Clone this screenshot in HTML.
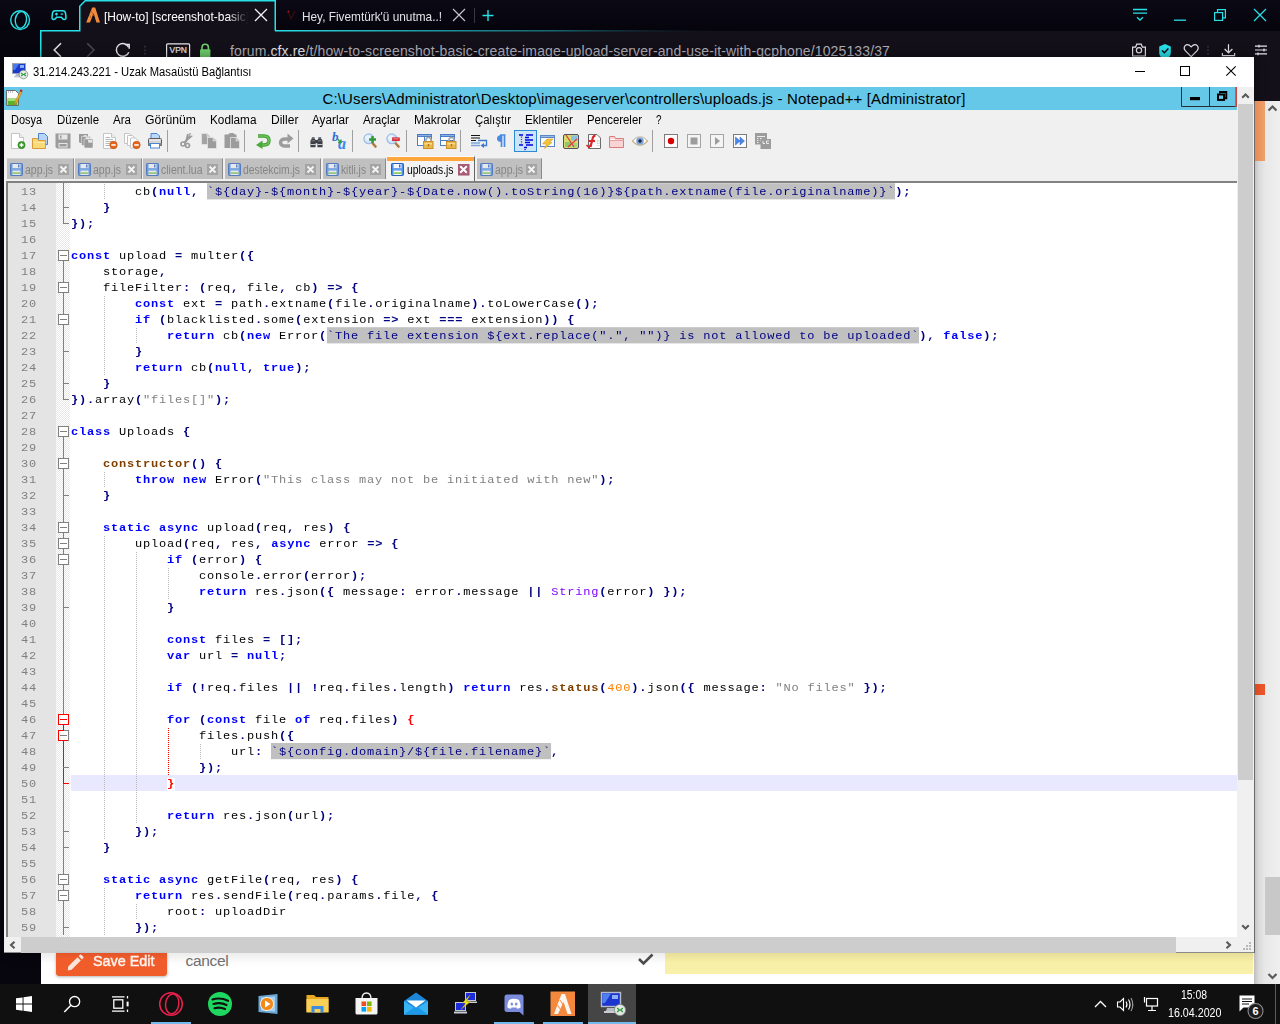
<!DOCTYPE html>
<html lang="tr"><head><meta charset="utf-8"><title>uploads.js - Notepad++</title>
<style>
*{box-sizing:border-box;margin:0;padding:0}
html,body{width:1280px;height:1024px;overflow:hidden;background:#07050e}
body{position:relative;font-family:"Liberation Sans",sans-serif;font-size:12px;color:#000}
.a{position:absolute}
svg{position:absolute;overflow:visible}
i{font-style:normal}
/* browser */
#tabstrip{left:0;top:0;width:1280px;height:31px;background:linear-gradient(#0b0915,#05030b)}
#navbar{left:41px;top:31px;width:1239px;height:70px;background:#131019}
.tabt{color:#fff;font-size:13px;white-space:nowrap;line-height:16px;overflow:hidden}
#url{left:230px;top:42px;font-size:14px;line-height:18px;color:#b0aeb8;white-space:nowrap}
#url b{font-weight:normal;color:#e6e4ea}
/* rdp window */
#rdp{left:4px;top:57px;width:1250px;height:896px;background:#fff;box-shadow:0 0 12px rgba(0,0,0,.45)}
#rdpt{left:29px;top:7px;font-size:12px;line-height:16px;white-space:nowrap;color:#000}
/* notepad++ */
#npp{left:0;top:30px;width:1233px;height:850px;background:#f0f0f0;overflow:hidden}
#ntitle{left:0;top:0;width:1233px;height:23px;background:#66c8e8}
#ntt{left:0;top:2px;width:1280px;text-align:center;font-size:15px;line-height:19px;white-space:nowrap;color:#000}
#menu{left:0;top:23px;width:1234px;height:19px;background:#f0f0f0}
#menu span{position:absolute;top:3px;font-size:12px;line-height:15px;white-space:nowrap}
#tb{left:0;top:42px;width:1234px;height:28px}
#tabs{left:0;top:70px;width:1234px;height:24px}
.tab{position:absolute;top:1px;height:21px;background:#c0c0c0;border-right:1px solid #8a8a8a;border-top:1px solid #d4d4d4;color:#858585;font-size:12.3px;line-height:22px;white-space:nowrap}
.tab.act{top:-1px;height:25px;background:linear-gradient(#ffa63d 4px,#f3f3f3 4px);color:#000;border-top:1px solid #fbfbfb;border-right:1.5px solid #666;line-height:25px}
.tab em{position:absolute;left:18px;top:0;font-style:normal}
/* editor */
#edwrap{left:1px;top:94px;width:1233px;height:756px;border-top:2px solid #828282;border-left:3px solid #828282;background:#fff;overflow:hidden}
.ed{position:absolute;left:0;top:0;width:1230px;height:760px;font-family:"Liberation Mono",monospace;font-size:12px;letter-spacing:0.8px;line-height:16px}
.lnbg{position:absolute;left:0;top:0;width:48px;height:760px;background:#e4e4e4}
.fmbg{position:absolute;left:48px;top:0;width:14px;height:760px;background:#f3f3f3;background-image:conic-gradient(#fff 25%,#e8e8e8 0 50%,#fff 0 75%,#e8e8e8 0);background-size:2px 2px}
.cur{position:absolute;left:63px;width:1170px;height:16px;background:#e8e8ff}
pre{font-family:inherit;font-size:inherit;line-height:17.7778px;position:absolute;top:2px;white-space:pre;transform:scaleY(.9);transform-origin:0 0}
.ln{left:0;width:29px;text-align:right;color:#808080}
.code{left:63px;color:#000}
.code b.kw{color:#0000ff}
.code b.op{color:#000080}
.code b.k2{color:#804000}
.code b.br{color:#ff0000;background:#fff}
.code i.ty{color:#8000ff}
.code i.num{color:#ff8000}
.code i.str{color:#808080}
.code i.raw{color:#000080;background:#c0c0c0;display:inline-block;height:17.7778px;line-height:17.7778px;vertical-align:top;position:relative;top:-2.2222px;padding-top:2.2222px}
.g,.gr{position:absolute;width:1px;background-image:linear-gradient(#b8b8b8 50%,transparent 0);background-size:1px 2px;background-position:0 1px}
.gr{background-image:linear-gradient(#ff0000 50%,transparent 0)}
.fold{left:48px;top:0}
/* scrollbars */
.sb{background:#f0f0f0}
.th{background:#cdcdcd}
/* taskbar */
#task{left:0;top:984px;width:1280px;height:40px;background:#101010}
.ul{position:absolute;top:38px;height:2px;background:#76b9ed}
.clock{color:#fff;font-size:12px;line-height:15px;white-space:nowrap}

</style></head>
<body>
<div class="a" id="tabstrip"></div><div class="a" id="navbar"></div>
<svg style="left:0;top:0" width="1280" height="101" viewBox="0 0 1280 101" fill="none">
<defs><linearGradient id="fade" x1="275" x2="740" y1="0" y2="0" gradientUnits="userSpaceOnUse"><stop offset="0" stop-color="#28e0e8"/><stop offset="0.6" stop-color="#1a7f8a" stop-opacity=".8"/><stop offset="1" stop-color="#131019" stop-opacity="0"/></linearGradient></defs>
<path d="M79.75,31 V6.2 L85.2,0.75 H275.25 V31 Z" fill="#131019"/>
<path d="M40.75,101 V30.75 H79.75 V6.2 L85.2,0.75 H275.25 V30.75" stroke="#28e0e8" stroke-width="1.5"/>
<path d="M275,30.75 H740" stroke="url(#fade)" stroke-width="1.5"/>
<!-- opera gx logo -->
<circle cx="20.1" cy="20.1" r="9.4" stroke="#28e0e8" stroke-width="1.4"/>
<ellipse cx="20.9" cy="19.9" rx="5.6" ry="8.3" stroke="#28e0e8" stroke-width="1.4" transform="rotate(8 20.9 19.9)"/>
<!-- gamepad -->
<path d="M55.2,10.8 H62.8 Q65.2,10.8 65.6,13.6 L66,17.6 Q66,19.6 64.4,19.6 Q63.2,19.6 62.2,18.2 L61.4,17.2 H56.6 L55.8,18.2 Q54.8,19.6 53.6,19.6 Q52,19.6 52,17.6 L52.4,13.6 Q52.8,10.8 55.2,10.8 Z" stroke="#28e0e8" stroke-width="1.5"/>
<path d="M55,14.2 H58 M56.5,12.8 V15.6 M60.8,14.2 H63" stroke="#28e0e8" stroke-width="1.2"/>
<!-- fivem favicon -->
<path d="M92.2,7.6 H95.2 L100,22.4 H96.4 L93.6,13.2 L90,22.4 H86.2 Z" fill="#f08a3c"/>
<path d="M91,11 L94,16 M89.5,15 L92,19" stroke="#b85c1c" stroke-width=".8"/>
<!-- tab close X -->
<path d="M255,9 L267,21 M267,9 L255,21" stroke="#f4f2f8" stroke-width="1.3"/>
<path d="M453,9 L465,21 M465,9 L453,21" stroke="#c4c2cc" stroke-width="1.2"/>
<!-- 2nd tab favicon -->
<path d="M287.5,11 L291,19 L295,11" stroke="#3a0c10" stroke-width="1.3"/><circle cx="288.5" cy="11.5" r=".9" fill="#a81818"/>
<path d="M474.5,8 V23" stroke="#3a3842" stroke-width="1"/>
<path d="M482.5,15.5 H493.5 M488,10 V21" stroke="#28e0e8" stroke-width="1.4"/>
<!-- window controls -->
<path d="M1133,9.5 H1147 M1133,13.2 H1147 M1137,17.2 L1140,20 L1143,17.2" stroke="#28e0e8" stroke-width="1.3"/>
<path d="M1174,20.2 H1186" stroke="#28e0e8" stroke-width="1.3"/>
<path d="M1217.5,12.5 V9.6 H1225.4 V17.8 H1223" stroke="#28e0e8" stroke-width="1.2"/><rect x="1214.6" y="12.6" width="8" height="7.8" stroke="#28e0e8" stroke-width="1.2"/>
<path d="M1254,9 L1266,21 M1266,9 L1254,21" stroke="#28e0e8" stroke-width="1.3"/>
<!-- nav -->
<path d="M61,43.2 L54.2,50 L61,56.8" stroke="#e6e4ea" stroke-width="1.5"/>
<path d="M87.2,43.2 L94,50 L87.2,56.8" stroke="#4c4a54" stroke-width="1.5"/>
<path d="M128.6,47.2 A6.4,6.4 0 1 0 128.8,52.2" stroke="#e6e4ea" stroke-width="1.5"/><path d="M125,44.5 H129.2 V48.8" stroke="#e6e4ea" stroke-width="1.5"/>
<path d="M145,46 V47.5 M145,49.5 V51 M145,53 V54.5" stroke="#3a3842" stroke-width="1.6"/>
<rect x="166.6" y="43.8" width="23" height="14" rx="1" stroke="#e6e4ea" stroke-width="1.2"/>
<path d="M202,50 V47.4 Q202,44.2 205.2,44.2 Q208.4,44.2 208.4,47.4 V50" stroke="#70cf6c" stroke-width="1.6"/><rect x="200" y="49.2" width="10.4" height="8" rx="1" fill="#70cf6c"/>
<!-- right icons -->
<path d="M1132.6,47.2 H1135.5 L1136.8,44.2 H1141.2 L1142.5,47.2 H1145.4 V56 H1132.6 Z" stroke="#e6e4ea" stroke-width="1.2"/><circle cx="1139" cy="50.2" r="2.6" stroke="#e6e4ea" stroke-width="1.2"/>
<path d="M1159.2,46.4 L1165,44 L1170.8,46.4 V53 Q1170.8,57.5 1165,58.5 Q1159.2,57.5 1159.2,53 Z" fill="#28e0e8"/><path d="M1162,50.5 L1164.4,52.8 L1168.4,48.4" stroke="#0c0a14" stroke-width="1.5"/>
<path d="M1191.2,56.6 L1185.5,50.9 Q1183,48 1185.2,45.6 Q1187.8,43.4 1191.2,46.8 Q1194.6,43.4 1197.2,45.6 Q1199.4,48 1196.9,50.9 Z" stroke="#e6e4ea" stroke-width="1.2"/>
<path d="M1208,46 V47.5 M1208,49.5 V51 M1208,53 V54.5" stroke="#3a3842" stroke-width="1.6"/>
<path d="M1228.5,44.2 V52.5 M1224.6,49 L1228.5,52.8 L1232.4,49 M1222.4,53 V55.6 H1234.6 V53" stroke="#e6e4ea" stroke-width="1.2"/>
<path d="M1255,46.2 H1267 M1255,50 H1267 M1255,53.8 H1267 M1259,44.8 V47.6 M1264,48.6 V51.4 M1258,52.4 V55.2" stroke="#e6e4ea" stroke-width="1.2"/>
</svg>
<div class="a tabt" style="left:104px;top:9px;width:146px;-webkit-mask-image:linear-gradient(90deg,#000 124px,transparent 144px);mask-image:linear-gradient(90deg,#000 124px,transparent 144px)"><span style="display:inline-block;transform:scaleX(0.9205);transform-origin:0 0">[How-to] [screenshot-basic]</span></div>
<div class="a tabt" style="left:302px;top:9px;color:#e4e2e8;transform:scaleX(0.9093);transform-origin:0 0">Hey, Fivemtürk'ü unutma..!</div>
<div class="a" style="left:169.5px;top:45px;font-size:8.5px;line-height:11px;color:#e6e4ea;-webkit-text-stroke:.2px #e6e4ea;letter-spacing:0.006px">VPN</div>
<div class="a" id="url" style="letter-spacing:0.126px">forum.<b>cfx.re</b>/t/how-to-screenshot-basic-create-image-upload-server-and-use-it-with-gcphone/1025133/37</div>
<div class="a" id="rdp">
<svg style="left:0;top:0" width="1250" height="30" viewBox="4 57 1250 30" fill="none">
<rect x="12.5" y="63.5" width="13" height="10" fill="#1a3ad0" stroke="#9aa2b0"/><path d="M13,64 H19 L15,70 H13 Z" fill="#4a7af0"/><rect x="20" y="65" width="4" height="3" fill="#8ab0f4"/>
<path d="M16,74 H22 V76 H15 Z" fill="#b8bcc4"/><rect x="14" y="76" width="9" height="1.5" fill="#c8ccd4"/>
<circle cx="23.5" cy="74.5" r="4.3" fill="#e8ece8" stroke="#7c8c7c" stroke-width=".8"/><path d="M21.2,73 L23,74.5 L21.2,76 M25.8,73 L24,74.5 L25.8,76" stroke="#2c9a3c" stroke-width="1.1"/>
<path d="M1135,71.5 H1145" stroke="#000" stroke-width="1"/>
<rect x="1180.5" y="66.5" width="9" height="9" stroke="#000" stroke-width="1"/>
<path d="M1226.3,66.3 L1235.7,75.7 M1235.7,66.3 L1226.3,75.7" stroke="#000" stroke-width="1.1"/>
</svg>
<div class="a" id="rdpt" style="transform:scaleX(0.9358);transform-origin:0 0">31.214.243.221 - Uzak Masaüstü Bağlantısı</div>
<div class="a" id="npp">
<div class="a" id="ntitle"><div class="a" id="ntt" style="letter-spacing:0.138px">C:\Users\Administrator\Desktop\imageserver\controllers\uploads.js - Notepad++ [Administrator]</div>
<svg style="left:0;top:0" width="1234" height="23" viewBox="4 87 1234 23" fill="none">
<path d="M6.5,90.5 H15.5 L18.5,93.5 V105.5 H6.5 Z" fill="#fcfcfc" stroke="#6c6c6c"/><rect x="7.5" y="98.5" width="10" height="6.5" fill="#58b428"/><rect x="7.5" y="98.5" width="10" height="2.5" fill="#a8dc74"/><path d="M8,92 H14" stroke="#8c8c8c" stroke-dasharray="1 1"/>
<path d="M20.5,91 L15,102 L14.5,104.5 L16.6,103 L22,92 Z" fill="#f4b428" stroke="#a4741c" stroke-width=".6"/><rect x="20" y="89.5" width="2.4" height="2.4" fill="#c4242c" transform="rotate(25 21 90.5)"/>
<path d="M1181.5,87 V106.5 H1235.5 M1209.5,87 V106.5" stroke="#2c2c34" stroke-width="1"/>
<rect x="1235.3" y="87" width="1.7" height="20" fill="#c8443c"/>
<rect x="1190" y="97" width="10" height="3.2" fill="#000"/>
<path d="M1220,93.5 V92 H1226.3 V98.2 H1225" stroke="#000" stroke-width="1.9"/><rect x="1218" y="94.5" width="6" height="5.4" stroke="#000" stroke-width="2"/>
</svg></div>
<div class="a" id="menu"><span style="left:7px;transform:scaleX(0.9113);transform-origin:0 0">Dosya</span><span style="left:53px;transform:scaleX(0.9539);transform-origin:0 0">Düzenle</span><span style="left:109px;transform:scaleX(0.9632);transform-origin:0 0">Ara</span><span style="left:141px;transform:scaleX(1.0194);transform-origin:0 0">Görünüm</span><span style="left:206px;transform:scaleX(0.9815);transform-origin:0 0">Kodlama</span><span style="left:267px;transform:scaleX(1.0021);transform-origin:0 0">Diller</span><span style="left:308px;transform:scaleX(0.9789);transform-origin:0 0">Ayarlar</span><span style="left:359px;transform:scaleX(0.9733);transform-origin:0 0">Araçlar</span><span style="left:410px;transform:scaleX(1.0067);transform-origin:0 0">Makrolar</span><span style="left:471px;transform:scaleX(0.9470);transform-origin:0 0">Çalıştır</span><span style="left:521px;transform:scaleX(0.9725);transform-origin:0 0">Eklentiler</span><span style="left:583px;transform:scaleX(0.9478);transform-origin:0 0">Pencereler</span><span style="left:652px;transform:scaleX(0.8224);transform-origin:0 0">?</span></div>
<div class="a" id="tb"><svg width="800" height="28" viewBox="0 0 800 28" style="left:0;top:0"><g transform="translate(6,4)"><path d="M1.5,0.5 H9.5 L13.5,4.5 V15.5 H1.5 Z" fill="#fff" stroke="#c4c4c4"/><path d="M9.5,0.5 V4.5 H13.5" fill="#eee" stroke="#c4c4c4"/><circle cx="11.5" cy="12" r="3.6" fill="#3c9a2c" stroke="#2c7a20" stroke-width=".6"/><path d="M9.5,12 H13.5 M11.5,10 V14" stroke="#fff" stroke-width="1.4"/></g><g transform="translate(28,4)"><path d="M6.5,0.5 H12.5 L15.5,3.5 V11.5 H6.5 Z" fill="#b8d4f6" stroke="#4a82d0"/><path d="M0.5,5.5 H5.5 L6.5,7.5 H13.5 V15.5 H0.5 Z" fill="#f9d978" stroke="#d89a36"/><path d="M1,9.5 H13" stroke="#fbe9a8"/></g><g transform="translate(51,4)"><path d="M0.5,0.5 H15.5 V15.5 H2 L0.5,14 Z" fill="#9c9c9c"/><rect x="3.5" y="1.5" width="9" height="5" fill="#e6e6e6"/><rect x="5" y="2.5" width="1.5" height="3" fill="#9c9c9c"/><rect x="3.5" y="10" width="9" height="4.5" fill="#e6e6e6"/><rect x="4.5" y="11" width="7" height="2.5" fill="#9c9c9c"/></g><g transform="translate(75,4)"><g transform="translate(0,1)"><path d="M0,0 H9 V9 H1 L0,8 Z" fill="#9a9a9a"/><rect x="4.5" y="1.2" width="3.5" height="2" fill="#e8e8e8"/></g><g transform="translate(2.5,3.5)" stroke="#f0f0f0" stroke-width=".5"><path d="M0,0 H9 V9 H1 L0,8 Z" fill="#9a9a9a"/><rect x="4.5" y="1.2" width="3.5" height="2" fill="#e8e8e8"/></g><g transform="translate(5,6)" stroke="#f0f0f0" stroke-width=".5"><path d="M0,0 H9 V9 H1 L0,8 Z" fill="#9a9a9a"/><rect x="4.5" y="1.2" width="3.5" height="2" fill="#e8e8e8"/></g></g><g transform="translate(98,4)"><path d="M1.5,0.5 H9.5 L13.5,4.5 V15.5 H1.5 Z" fill="#fff" stroke="#c4c4c4"/><path d="M9.5,0.5 V4.5 H13.5" fill="#eee" stroke="#c4c4c4"/><path d="M3.5,4.5 H8 M3.5,6.5 H11 M3.5,8.5 H11 M3.5,10.5 H9 M3.5,12.5 H8" stroke="#b0b0b0" stroke-width=".9"/><circle cx="11.5" cy="12" r="3.7" fill="#e8641a" stroke="#c04a0c" stroke-width=".6"/><rect x="9.3" y="11.2" width="4.4" height="1.6" fill="#fff"/></g><g transform="translate(120,4)"><g transform="translate(0,0)"><path d="M0.5,0.5 H5.5 L8.5,3.5 V10.5 H0.5 Z" fill="#fff" stroke="#c4c4c4"/></g><g transform="translate(3,2)"><path d="M0.5,0.5 H5.5 L8.5,3.5 V10.5 H0.5 Z" fill="#fff" stroke="#c4c4c4"/></g><g transform="translate(6,4.5)"><path d="M0.5,0.5 H5.5 L8.5,3.5 V10.5 H0.5 Z" fill="#fff" stroke="#c4c4c4"/></g><g transform="translate(1,0)"><circle cx="11.5" cy="12" r="3.7" fill="#e8641a" stroke="#c04a0c" stroke-width=".6"/><rect x="9.3" y="11.2" width="4.4" height="1.6" fill="#fff"/></g></g><g transform="translate(143,4)"><path d="M4,0.5 H10 L12.5,3 V8 H4 Z" fill="#bcd8f8" stroke="#4a86d6"/><path d="M1.5,6.5 Q1.5,5.5 2.5,5.5 H13.5 Q14.5,5.5 14.5,6.5 V12.5 H1.5 Z" fill="#d4d4d4" stroke="#5a5a5a"/><rect x="1.5" y="10" width="13" height="2.5" fill="#8a8a8a"/><rect x="3.5" y="10.5" width="9" height="4.5" fill="#fff" stroke="#4a86d6"/><path d="M2.5,7 H13.5" stroke="#f4f4f4"/></g><rect x="163" y="1" width="1" height="22" fill="#a0a0a0"/><g transform="translate(176,4)"><path d="M8,1 L6,9 M10.5,3 L4.5,9.5" stroke="#9a9a9a" stroke-width="2" fill="none"/><circle cx="3" cy="11" r="2" fill="none" stroke="#9a9a9a" stroke-width="1.6"/><circle cx="7.5" cy="12.5" r="2" fill="none" stroke="#9a9a9a" stroke-width="1.6"/><path d="M9.5,0 L11,0 L9,6 Z M12,2 L12.5,3.5 L8,7Z" fill="#9a9a9a"/></g><g transform="translate(197,4)"><g transform="translate(0,0)"><path d="M0.5,0.5 H6 L9.5,4 V11.5 H0.5 Z" fill="#a4a4a4" stroke="#e4e4e4" stroke-width=".8"/><path d="M6,0.5 V4 H9.5" fill="#c8c8c8" stroke="#e4e4e4" stroke-width=".6"/></g><g transform="translate(6,4)"><path d="M0.5,0.5 H6 L9.5,4 V11.5 H0.5 Z" fill="#9c9c9c" stroke="#e4e4e4" stroke-width=".8"/><path d="M6,0.5 V4 H9.5" fill="#c4c4c4" stroke="#e4e4e4" stroke-width=".6"/></g></g><g transform="translate(220,4)"><path d="M0.5,1.5 H4 Q5,-0.5 8,0 Q10,-0.5 11,1.5 H12.5 V15 H0.5 Z" fill="#9c9c9c"/><g transform="translate(6,4)"><path d="M0.5,0.5 H6 L9.5,4 V11.5 H0.5 Z" fill="#9c9c9c" stroke="#e4e4e4" stroke-width=".8"/><path d="M6,0.5 V4 H9.5" fill="#c4c4c4" stroke="#e4e4e4" stroke-width=".6"/></g></g><rect x="240" y="1" width="1" height="22" fill="#a0a0a0"/><g transform="translate(252,4)"><path d="M2,3 H8 Q13,3 13,7.5 Q13,12 8,12 H6" fill="none" stroke="#3f9a35" stroke-width="3.4"/><path d="M2,3 H8 Q13,3 13,7.5 Q13,12 8,12 H6" fill="none" stroke="#6cc456" stroke-width="1.6"/><path d="M0,12 L6.5,7.5 V16 Z" fill="#4aa83c"/></g><g transform="translate(274,4)"><path d="M12,6 H7.5 Q2.5,6 2.5,9.5 Q2.5,13 7.5,13 H12" fill="none" stroke="#9c9c9c" stroke-width="3.4"/><path d="M15.5,5.5 L9.5,0.5 V10.5 Z" fill="#9c9c9c"/></g><rect x="294" y="1" width="1" height="22" fill="#a0a0a0"/><g transform="translate(305,4)"><g transform="translate(0.5,3) scale(0.93,0.8)"><path d="M1,6 L2.5,3 H5.5 L6.5,5 H8.5 L9.5,3 H12.5 L14,6 V14 H8.5 V9 H6.5 V14 H1 Z" fill="#3c4046"/><rect x="2.5" y="1.5" width="3" height="2" fill="#555c66"/><rect x="9.5" y="1.5" width="3" height="2" fill="#555c66"/><rect x="1" y="10" width="5.5" height="1.3" fill="#c8ccd4"/><rect x="8.5" y="10" width="5.5" height="1.3" fill="#c8ccd4"/><path d="M2,6 H6 M9,6 H13" stroke="#8c96a4" stroke-width=".8"/></g></g><g transform="translate(328,4)"><text x="0" y="8" font-family="Liberation Serif,serif" font-style="italic" font-weight="bold" font-size="13" fill="#2f6fd8">b</text><text x="6" y="16" font-family="Liberation Serif,serif" font-style="italic" font-weight="bold" font-size="16" fill="#3a88ec">a</text><path d="M5.5,6 L8.5,9 M9,6.5 V9.5 H6" stroke="#2c9a4a" stroke-width="1.4" fill="none"/></g><rect x="348" y="1" width="1" height="22" fill="#a0a0a0"/><g transform="translate(359,4)"><path d="M8.5,9 L12.5,13.5" stroke="#b07a3c" stroke-width="2.6" stroke-linecap="round"/><circle cx="5.8" cy="5.8" r="4.9" fill="#d4e6fa" stroke="#9cbce6" stroke-width="1.2"/><circle cx="4.8" cy="4.8" r="2.6" fill="#eaf3fd"/><path d="M6,6.5 H13 M9.5,3 V10" stroke="#2f9a38" stroke-width="2.4"/></g><g transform="translate(382,4)"><path d="M8.5,9 L12.5,13.5" stroke="#b07a3c" stroke-width="2.6" stroke-linecap="round"/><circle cx="5.8" cy="5.8" r="4.9" fill="#d4e6fa" stroke="#9cbce6" stroke-width="1.2"/><circle cx="4.8" cy="4.8" r="2.6" fill="#eaf3fd"/><rect x="6.5" y="4.8" width="7" height="3" fill="#e8222c" stroke="#b81820" stroke-width=".5"/><rect x="7.5" y="5.5" width="5" height=".8" fill="#f8a0a4"/></g><rect x="402" y="1" width="1" height="22" fill="#a0a0a0"/><g transform="translate(413,4)"><rect x="0.5" y="1.5" width="14" height="11" fill="#fff" stroke="#4a7cc8"/><rect x="0.5" y="1.5" width="14" height="2" fill="#8cb0e4" stroke="#4a7cc8"/><path d="M7.5,3.5 V12.5" stroke="#4a7cc8"/><path d="M9,9 V7 Q9,4.5 11.5,4.5 Q14,4.5 14,7 V9" fill="none" stroke="#a8a8a8" stroke-width="1.6"/><rect x="6.5" y="8.5" width="9.5" height="7" fill="#ebb94a" stroke="#c8902a"/><rect x="7.5" y="10" width="7.5" height="1.5" fill="#f8dc8c"/><rect x="10.8" y="11" width="1.4" height="2.4" fill="#a87420"/></g><g transform="translate(436,4)"><rect x="0.5" y="1.5" width="14" height="11" fill="#fff" stroke="#4a7cc8"/><rect x="0.5" y="1.5" width="14" height="2" fill="#8cb0e4" stroke="#4a7cc8"/><path d="M0.5,7.5 H14.5" stroke="#4a7cc8"/><path d="M9,9 V7 Q9,4.5 11.5,4.5 Q14,4.5 14,7 V9" fill="none" stroke="#a8a8a8" stroke-width="1.6"/><rect x="6.5" y="8.5" width="9.5" height="7" fill="#ebb94a" stroke="#c8902a"/><rect x="7.5" y="10" width="7.5" height="1.5" fill="#f8dc8c"/><rect x="10.8" y="11" width="1.4" height="2.4" fill="#a87420"/></g><rect x="456" y="1" width="1" height="22" fill="#a0a0a0"/><g transform="translate(467,4)"><path d="M0,2.5 H9 M0,5 H9 M0,7.5 H5" stroke="#111" stroke-width="1.2"/><path d="M0,10 H9 M0,12.5 H9" stroke="#7aa6e0" stroke-width="1.6"/><path d="M7,7.5 H15.5 V12.5 H12" fill="none" stroke="#3a78d0" stroke-width="1.3"/><path d="M9.5,12.5 L13,10 V15 Z" fill="#3a78d0"/></g><g transform="translate(490,4)"><path d="M6,2 H11.5 M7.5,2 V14 M10.5,2 V14" stroke="#4a8ae0" stroke-width="1.7" fill="none"/><path d="M7.5,2 Q3,2 3,5.5 Q3,9 7.5,9 Z" fill="#4a8ae0"/></g><rect x="510.5" y="1.5" width="22" height="21" fill="#cce4f7" stroke="#2a8ad4"/><g transform="translate(514,4)"><path d="M1,2 H5 M8,2 H15 M7,4.5 H11 M7,7 H15 M7,9.5 H12 M1,12 H5 M8,12 H15 M6,14.5 H9" stroke="#0000e0" stroke-width="1.3"/><path d="M3.5,3.5 V11" stroke="#e00000" stroke-width="1.2" stroke-dasharray="1.2 1.2"/><rect x="6.5" y="16" width="1.2" height="1.2" fill="#0000e0"/></g><g transform="translate(536,4)"><rect x="0.5" y="2.5" width="14" height="11" fill="#fbfbfb" stroke="#5a86c8"/><rect x="0.5" y="2.5" width="14" height="2" fill="#9cbcea" stroke="#5a86c8"/><path d="M7,6 H13 L9.5,9.5 H12 L4.5,15.5 L6.5,11 H2.5 Z" fill="#f0c43c" stroke="#d8a020" stroke-width=".6"/></g><g transform="translate(559,4)"><rect x="0.5" y="1.5" width="15" height="14" rx="1.5" fill="#d8dc6c" stroke="#50505c"/><rect x="8" y="2.5" width="6.5" height="5" fill="#8cc0dc"/><rect x="2" y="9" width="6" height="5" fill="#8cc86c"/><rect x="9" y="10" width="5" height="4" fill="#a8d07c"/><path d="M3,2 L11,14 M14,6 L5,14" stroke="#e0403c" stroke-width="1.3"/></g><g transform="translate(582,4)"><path d="M2.5,1.5 H11 L14.5,5 V15.5 H2.5 Z" fill="#fcfcfc" stroke="#6c6c6c"/><path d="M9.5,3 Q7,2.5 6.5,6 L4.5,14 M2.5,8 H9 " stroke="#e0242c" stroke-width="2.2" fill="none"/><path d="M0.5,12 L3,14.5 L5,11" stroke="#e0242c" stroke-width="1.6" fill="none"/><path d="M11.5,7 V13 M13,7 V13" stroke="#b8c8b8" stroke-width=".8" stroke-dasharray="1.5 1"/></g><g transform="translate(605,4)"><path d="M0.5,3.5 H5.5 L6.5,5.5 H14.5 V14.5 H0.5 Z" fill="#f8d4d4" stroke="#d87c7c"/><path d="M0.5,7.5 H14.5" stroke="#e8a0a0"/><path d="M1.5,6.5 H6" stroke="#fff"/></g><g transform="translate(628,4)"><path d="M0.5,8 Q8,-0.5 15.5,8 Q8,16.5 0.5,8 Z" fill="#fdfdfd" stroke="#c8b48c" stroke-width="1.2"/><circle cx="8" cy="8" r="3.8" fill="#7ca4dc"/><circle cx="8" cy="8" r="1.7" fill="#1c2438"/><path d="M1,7 Q8,0 15,7" stroke="#d8d4c8" stroke-width="1" fill="none"/></g><rect x="648" y="1" width="1" height="22" fill="#a0a0a0"/><g transform="translate(660,4)"><rect x="0.5" y="1.5" width="13" height="13" fill="#fcfcfc" stroke="#7c7c7c"/><circle cx="7" cy="8" r="3.2" fill="#d40000"/></g><g transform="translate(683,4)"><rect x="0.5" y="1.5" width="13" height="13" fill="#f4f4f4" stroke="#a4a4a4"/><rect x="3.5" y="4.5" width="7" height="7" fill="#9c9c9c"/></g><g transform="translate(706,4)"><rect x="0.5" y="1.5" width="13" height="13" fill="#f4f4f4" stroke="#a4a4a4"/><path d="M5,4 L10,8 L5,12 Z" fill="#9c9c9c"/></g><g transform="translate(729,4)"><rect x="0.5" y="1.5" width="13" height="13" fill="#fcfcfc" stroke="#7c7c7c"/><path d="M2.5,4 L7,8 L2.5,12 Z M7,4 L11.5,8 L7,12 Z" fill="#4a88e8" stroke="#2c5cc0" stroke-width=".5"/></g><g transform="translate(751,4)"><rect x="0" y="0" width="12" height="11.5" fill="#9c9c9c"/><path d="M2,3.5 H10 M2,5.5 H3.5 M5,5.5 H6.5 M2,7.5 H3.5 M5,7.5 H6.5 M2,9.5 H3.5" stroke="#ececec" stroke-width="1"/><rect x="5.5" y="6" width="10.5" height="10" fill="#9c9c9c"/><path d="M8,8 V10.5 H10 M11.5,8 H14 M11.5,8 V10.5 H14" stroke="#ececec" stroke-width="1" fill="none"/></g></svg></div>
<div class="a" id="tabs"><div class="tab" style="left:3px;width:66.5px"><svg width="13" height="13" viewBox="0 0 13 13" style="left:3px;top:4px;opacity:0.72"><rect x=".5" y=".5" width="12" height="12" rx=".8" fill="#4a8ee8" stroke="#2c60c0"/><rect x="2.5" y="1" width="8" height="4.2" fill="#f4f8fe"/><rect x="8" y="1.5" width="1.5" height="3" fill="#3c6cc0"/><rect x="2" y="5.2" width="9" height="1.6" fill="#6ca4f0"/><rect x="2.5" y="7.5" width="8" height="4.5" fill="#f6faf4"/><rect x="2.5" y="9.3" width="8" height="1.7" fill="#84c860"/></svg><em style="transform:scaleX(0.8529);transform-origin:0 0">app.js</em><svg width="11" height="11" viewBox="0 0 11 11" style="left:50.5px;top:5px"><rect width="11" height="11" fill="#a4a4a4"/><path d="M2.5,2.5 L8.5,8.5 M8.5,2.5 L2.5,8.5" stroke="#f4f4f4" stroke-width="1.8"/></svg></div><div class="tab" style="left:71px;width:66.5px"><svg width="13" height="13" viewBox="0 0 13 13" style="left:3px;top:4px;opacity:0.72"><rect x=".5" y=".5" width="12" height="12" rx=".8" fill="#4a8ee8" stroke="#2c60c0"/><rect x="2.5" y="1" width="8" height="4.2" fill="#f4f8fe"/><rect x="8" y="1.5" width="1.5" height="3" fill="#3c6cc0"/><rect x="2" y="5.2" width="9" height="1.6" fill="#6ca4f0"/><rect x="2.5" y="7.5" width="8" height="4.5" fill="#f6faf4"/><rect x="2.5" y="9.3" width="8" height="1.7" fill="#84c860"/></svg><em style="transform:scaleX(0.8529);transform-origin:0 0">app.js</em><svg width="11" height="11" viewBox="0 0 11 11" style="left:50.5px;top:5px"><rect width="11" height="11" fill="#a4a4a4"/><path d="M2.5,2.5 L8.5,8.5 M8.5,2.5 L2.5,8.5" stroke="#f4f4f4" stroke-width="1.8"/></svg></div><div class="tab" style="left:139px;width:79.5px"><svg width="13" height="13" viewBox="0 0 13 13" style="left:3px;top:4px;opacity:0.72"><rect x=".5" y=".5" width="12" height="12" rx=".8" fill="#4a8ee8" stroke="#2c60c0"/><rect x="2.5" y="1" width="8" height="4.2" fill="#f4f8fe"/><rect x="8" y="1.5" width="1.5" height="3" fill="#3c6cc0"/><rect x="2" y="5.2" width="9" height="1.6" fill="#6ca4f0"/><rect x="2.5" y="7.5" width="8" height="4.5" fill="#f6faf4"/><rect x="2.5" y="9.3" width="8" height="1.7" fill="#84c860"/></svg><em style="transform:scaleX(0.8548);transform-origin:0 0">client.lua</em><svg width="11" height="11" viewBox="0 0 11 11" style="left:63.5px;top:5px"><rect width="11" height="11" fill="#a4a4a4"/><path d="M2.5,2.5 L8.5,8.5 M8.5,2.5 L2.5,8.5" stroke="#f4f4f4" stroke-width="1.8"/></svg></div><div class="tab" style="left:221px;width:95.5px"><svg width="13" height="13" viewBox="0 0 13 13" style="left:3px;top:4px;opacity:0.72"><rect x=".5" y=".5" width="12" height="12" rx=".8" fill="#4a8ee8" stroke="#2c60c0"/><rect x="2.5" y="1" width="8" height="4.2" fill="#f4f8fe"/><rect x="8" y="1.5" width="1.5" height="3" fill="#3c6cc0"/><rect x="2" y="5.2" width="9" height="1.6" fill="#6ca4f0"/><rect x="2.5" y="7.5" width="8" height="4.5" fill="#f6faf4"/><rect x="2.5" y="9.3" width="8" height="1.7" fill="#84c860"/></svg><em style="transform:scaleX(0.8425);transform-origin:0 0">destekcim.js</em><svg width="11" height="11" viewBox="0 0 11 11" style="left:79.5px;top:5px"><rect width="11" height="11" fill="#a4a4a4"/><path d="M2.5,2.5 L8.5,8.5 M8.5,2.5 L2.5,8.5" stroke="#f4f4f4" stroke-width="1.8"/></svg></div><div class="tab" style="left:319px;width:62.5px"><svg width="13" height="13" viewBox="0 0 13 13" style="left:3px;top:4px;opacity:0.72"><rect x=".5" y=".5" width="12" height="12" rx=".8" fill="#4a8ee8" stroke="#2c60c0"/><rect x="2.5" y="1" width="8" height="4.2" fill="#f4f8fe"/><rect x="8" y="1.5" width="1.5" height="3" fill="#3c6cc0"/><rect x="2" y="5.2" width="9" height="1.6" fill="#6ca4f0"/><rect x="2.5" y="7.5" width="8" height="4.5" fill="#f6faf4"/><rect x="2.5" y="9.3" width="8" height="1.7" fill="#84c860"/></svg><em style="transform:scaleX(0.8316);transform-origin:0 0">kitli.js</em><svg width="11" height="11" viewBox="0 0 11 11" style="left:46.5px;top:5px"><rect width="11" height="11" fill="#a4a4a4"/><path d="M2.5,2.5 L8.5,8.5 M8.5,2.5 L2.5,8.5" stroke="#f4f4f4" stroke-width="1.8"/></svg></div><div class="tab act" style="left:383px;width:88px"><svg width="13" height="13" viewBox="0 0 13 13" style="left:4px;top:6px;opacity:1"><rect x=".5" y=".5" width="12" height="12" rx=".8" fill="#4a8ee8" stroke="#2c60c0"/><rect x="2.5" y="1" width="8" height="4.2" fill="#f4f8fe"/><rect x="8" y="1.5" width="1.5" height="3" fill="#3c6cc0"/><rect x="2" y="5.2" width="9" height="1.6" fill="#6ca4f0"/><rect x="2.5" y="7.5" width="8" height="4.5" fill="#f6faf4"/><rect x="2.5" y="9.3" width="8" height="1.7" fill="#84c860"/></svg><em style="left:20px;top:1px;transform:scaleX(0.8397);transform-origin:0 0">uploads.js</em><svg width="11" height="11" viewBox="0 0 10 10" style="left:71px;top:7px"><rect width="10.5" height="10.5" fill="#a85c74"/><path d="M2,2 L8,8 M8,2 L2,8" stroke="#fff" stroke-width="1.8"/></svg></div><div class="tab" style="left:472.5px;width:65.5px"><svg width="13" height="13" viewBox="0 0 13 13" style="left:3px;top:4px;opacity:0.72"><rect x=".5" y=".5" width="12" height="12" rx=".8" fill="#4a8ee8" stroke="#2c60c0"/><rect x="2.5" y="1" width="8" height="4.2" fill="#f4f8fe"/><rect x="8" y="1.5" width="1.5" height="3" fill="#3c6cc0"/><rect x="2" y="5.2" width="9" height="1.6" fill="#6ca4f0"/><rect x="2.5" y="7.5" width="8" height="4.5" fill="#f6faf4"/><rect x="2.5" y="9.3" width="8" height="1.7" fill="#84c860"/></svg><em style="transform:scaleX(0.8529);transform-origin:0 0">app.js</em><svg width="11" height="11" viewBox="0 0 11 11" style="left:49.5px;top:5px"><rect width="11" height="11" fill="#a4a4a4"/><path d="M2.5,2.5 L8.5,8.5 M8.5,2.5 L2.5,8.5" stroke="#f4f4f4" stroke-width="1.8"/></svg></div></div>
<div class="a" id="edwrap"><div class="ed">
<div class="lnbg"></div><div class="fmbg"></div>
<div class="cur" style="top:592px"></div>
<pre class="ln">13
14
15
16
17
18
19
20
21
22
23
24
25
26
27
28
29
30
31
32
33
34
35
36
37
38
39
40
41
42
43
44
45
46
47
48
49
50
51
52
53
54
55
56
57
58
59</pre>
<pre class="code">        cb<b class="op">(</b><b class="kw">null</b><b class="op">,</b> <i class="raw">`${day}-${month}-${year}-${Date.now().toString(16)}${path.extname(file.originalname)}`</i><b class="op">);</b>
    <b class="op">}</b>
<b class="op">});</b>

<b class="kw">const</b> upload <b class="op">=</b> multer<b class="op">({</b>
    storage<b class="op">,</b>
    fileFilter<b class="op">:</b> <b class="op">(</b>req<b class="op">,</b> file<b class="op">,</b> cb<b class="op">)</b> <b class="op">=&gt;</b> <b class="op">{</b>
        <b class="kw">const</b> ext <b class="op">=</b> path<b class="op">.</b>extname<b class="op">(</b>file<b class="op">.</b>originalname<b class="op">).</b>toLowerCase<b class="op">();</b>
        <b class="kw">if</b> <b class="op">(</b>blacklisted<b class="op">.</b>some<b class="op">(</b>extension <b class="op">=&gt;</b> ext <b class="op">===</b> extension<b class="op">))</b> <b class="op">{</b>
            <b class="kw">return</b> cb<b class="op">(</b><b class="kw">new</b> Error<b class="op">(</b><i class="raw">`The file extension ${ext.replace(".", "")} is not allowed to be uploaded`</i><b class="op">),</b> <b class="kw">false</b><b class="op">);</b>
        <b class="op">}</b>
        <b class="kw">return</b> cb<b class="op">(</b><b class="kw">null</b><b class="op">,</b> <b class="kw">true</b><b class="op">);</b>
    <b class="op">}</b>
<b class="op">}).</b>array<b class="op">(</b><i class="str">"files[]"</i><b class="op">);</b>

<b class="kw">class</b> Uploads <b class="op">{</b>

    <b class="k2">constructor</b><b class="op">()</b> <b class="op">{</b>
        <b class="kw">throw</b> <b class="kw">new</b> Error<b class="op">(</b><i class="str">"This class may not be initiated with new"</i><b class="op">);</b>
    <b class="op">}</b>

    <b class="kw">static</b> <b class="kw">async</b> upload<b class="op">(</b>req<b class="op">,</b> res<b class="op">)</b> <b class="op">{</b>
        upload<b class="op">(</b>req<b class="op">,</b> res<b class="op">,</b> <b class="kw">async</b> error <b class="op">=&gt;</b> <b class="op">{</b>
            <b class="kw">if</b> <b class="op">(</b>error<b class="op">)</b> <b class="op">{</b>
                console<b class="op">.</b>error<b class="op">(</b>error<b class="op">);</b>
                <b class="kw">return</b> res<b class="op">.</b>json<b class="op">({</b> message<b class="op">:</b> error<b class="op">.</b>message <b class="op">||</b> <i class="ty">String</i><b class="op">(</b>error<b class="op">)</b> <b class="op">});</b>
            <b class="op">}</b>

            <b class="kw">const</b> files <b class="op">=</b> <b class="op">[];</b>
            <b class="kw">var</b> url <b class="op">=</b> <b class="kw">null</b><b class="op">;</b>

            <b class="kw">if</b> <b class="op">(!</b>req<b class="op">.</b>files <b class="op">||</b> <b class="op">!</b>req<b class="op">.</b>files<b class="op">.</b>length<b class="op">)</b> <b class="kw">return</b> res<b class="op">.</b><b class="k2">status</b><b class="op">(</b><i class="num">400</i><b class="op">).</b>json<b class="op">({</b> message<b class="op">:</b> <i class="str">"No files"</i> <b class="op">});</b>

            <b class="kw">for</b> <b class="op">(</b><b class="kw">const</b> file <b class="kw">of</b> req<b class="op">.</b>files<b class="op">)</b> <b class="br">{</b>
                files<b class="op">.</b>push<b class="op">({</b>
                    url<b class="op">:</b> <i class="raw">`${config.domain}/${file.filename}`</i><b class="op">,</b>
                <b class="op">});</b>
            <b class="br">}</b>

            <b class="kw">return</b> res<b class="op">.</b>json<b class="op">(</b>url<b class="op">);</b>
        <b class="op">});</b>
    <b class="op">}</b>

    <b class="kw">static</b> <b class="kw">async</b> getFile<b class="op">(</b>req<b class="op">,</b> res<b class="op">)</b> <b class="op">{</b>
        <b class="kw">return</b> res<b class="op">.</b>sendFile<b class="op">(</b>req<b class="op">.</b>params<b class="op">.</b>file<b class="op">,</b> <b class="op">{</b>
            root<b class="op">:</b> uploadDir
        <b class="op">});</b></pre>
<div class="g" style="left:96px;top:0px;height:16px"></div>
<div class="g" style="left:96px;top:112px;height:80px"></div>
<div class="g" style="left:96px;top:288px;height:16px"></div>
<div class="g" style="left:96px;top:352px;height:304px"></div>
<div class="g" style="left:96px;top:704px;height:48px"></div>
<div class="g" style="left:128px;top:144px;height:16px"></div>
<div class="g" style="left:128px;top:368px;height:272px"></div>
<div class="g" style="left:128px;top:720px;height:16px"></div>
<div class="g" style="left:160px;top:384px;height:32px"></div>
<div class="gr" style="left:160px;top:544px;height:48px"></div>
<div class="gr" style="left:160px;top:544px;height:48px"></div>
<div class="g" style="left:192px;top:560px;height:16px"></div>
<svg class="fold" width="14" height="752" viewBox="0 0 14 752" shape-rendering="crispEdges"><rect x="7" y="0" width="1" height="16" fill="#808080"/><rect x="7" y="16" width="1" height="16" fill="#808080"/><rect x="7" y="24" width="6" height="1" fill="#808080"/><rect x="7" y="32" width="1" height="9" fill="#808080"/><rect x="7" y="40" width="6" height="1" fill="#808080"/><rect x="7" y="78" width="1" height="2" fill="#808080"/><rect x="2.5" y="67.5" width="10" height="10" fill="#fff" stroke="#808080" stroke-width="1"/><rect x="4" y="72" width="7" height="1" fill="#808080"/><rect x="7" y="80" width="1" height="16" fill="#808080"/><rect x="7" y="96" width="1" height="3" fill="#808080"/><rect x="7" y="110" width="1" height="2" fill="#808080"/><rect x="2.5" y="99.5" width="10" height="10" fill="#fff" stroke="#808080" stroke-width="1"/><rect x="4" y="104" width="7" height="1" fill="#808080"/><rect x="7" y="112" width="1" height="16" fill="#808080"/><rect x="7" y="128" width="1" height="3" fill="#808080"/><rect x="7" y="142" width="1" height="2" fill="#808080"/><rect x="2.5" y="131.5" width="10" height="10" fill="#fff" stroke="#808080" stroke-width="1"/><rect x="4" y="136" width="7" height="1" fill="#808080"/><rect x="7" y="144" width="1" height="16" fill="#808080"/><rect x="7" y="160" width="1" height="16" fill="#808080"/><rect x="7" y="168" width="6" height="1" fill="#808080"/><rect x="7" y="176" width="1" height="16" fill="#808080"/><rect x="7" y="192" width="1" height="16" fill="#808080"/><rect x="7" y="200" width="6" height="1" fill="#808080"/><rect x="7" y="208" width="1" height="9" fill="#808080"/><rect x="7" y="216" width="6" height="1" fill="#808080"/><rect x="7" y="254" width="1" height="2" fill="#808080"/><rect x="2.5" y="243.5" width="10" height="10" fill="#fff" stroke="#808080" stroke-width="1"/><rect x="4" y="248" width="7" height="1" fill="#808080"/><rect x="7" y="256" width="1" height="16" fill="#808080"/><rect x="7" y="272" width="1" height="3" fill="#808080"/><rect x="7" y="286" width="1" height="2" fill="#808080"/><rect x="2.5" y="275.5" width="10" height="10" fill="#fff" stroke="#808080" stroke-width="1"/><rect x="4" y="280" width="7" height="1" fill="#808080"/><rect x="7" y="288" width="1" height="16" fill="#808080"/><rect x="7" y="304" width="1" height="16" fill="#808080"/><rect x="7" y="312" width="6" height="1" fill="#808080"/><rect x="7" y="320" width="1" height="16" fill="#808080"/><rect x="7" y="336" width="1" height="3" fill="#808080"/><rect x="7" y="350" width="1" height="2" fill="#808080"/><rect x="2.5" y="339.5" width="10" height="10" fill="#fff" stroke="#808080" stroke-width="1"/><rect x="4" y="344" width="7" height="1" fill="#808080"/><rect x="7" y="352" width="1" height="3" fill="#808080"/><rect x="7" y="366" width="1" height="2" fill="#808080"/><rect x="2.5" y="355.5" width="10" height="10" fill="#fff" stroke="#808080" stroke-width="1"/><rect x="4" y="360" width="7" height="1" fill="#808080"/><rect x="7" y="368" width="1" height="3" fill="#808080"/><rect x="7" y="382" width="1" height="2" fill="#808080"/><rect x="2.5" y="371.5" width="10" height="10" fill="#fff" stroke="#808080" stroke-width="1"/><rect x="4" y="376" width="7" height="1" fill="#808080"/><rect x="7" y="384" width="1" height="16" fill="#808080"/><rect x="7" y="400" width="1" height="16" fill="#808080"/><rect x="7" y="416" width="1" height="16" fill="#808080"/><rect x="7" y="424" width="6" height="1" fill="#808080"/><rect x="7" y="432" width="1" height="16" fill="#808080"/><rect x="7" y="448" width="1" height="16" fill="#808080"/><rect x="7" y="464" width="1" height="16" fill="#808080"/><rect x="7" y="480" width="1" height="16" fill="#808080"/><rect x="7" y="496" width="1" height="16" fill="#808080"/><rect x="7" y="512" width="1" height="16" fill="#808080"/><rect x="7" y="528" width="1" height="3" fill="#808080"/><rect x="7" y="542" width="1" height="2" fill="#ff0000"/><rect x="2.5" y="531.5" width="10" height="10" fill="#fff" stroke="#ff0000" stroke-width="1"/><rect x="4" y="536" width="7" height="1" fill="#ff0000"/><rect x="7" y="544" width="1" height="3" fill="#ff0000"/><rect x="7" y="558" width="1" height="2" fill="#ff0000"/><rect x="2.5" y="547.5" width="10" height="10" fill="#fff" stroke="#ff0000" stroke-width="1"/><rect x="8" y="547" width="5" height="1" fill="#808080"/><rect x="12" y="547" width="1" height="11" fill="#808080"/><rect x="4" y="552" width="7" height="1" fill="#808080"/><rect x="7" y="560" width="1" height="16" fill="#ff0000"/><rect x="7" y="576" width="1" height="16" fill="#ff0000"/><rect x="7" y="584" width="6" height="1" fill="#808080"/><rect x="7" y="592" width="1" height="9" fill="#ff0000"/><rect x="7" y="601" width="1" height="7" fill="#808080"/><rect x="7" y="600" width="6" height="1" fill="#ff0000"/><rect x="7" y="608" width="1" height="16" fill="#808080"/><rect x="7" y="624" width="1" height="16" fill="#808080"/><rect x="7" y="640" width="1" height="16" fill="#808080"/><rect x="7" y="648" width="6" height="1" fill="#808080"/><rect x="7" y="656" width="1" height="16" fill="#808080"/><rect x="7" y="664" width="6" height="1" fill="#808080"/><rect x="7" y="672" width="1" height="16" fill="#808080"/><rect x="7" y="688" width="1" height="3" fill="#808080"/><rect x="7" y="702" width="1" height="2" fill="#808080"/><rect x="2.5" y="691.5" width="10" height="10" fill="#fff" stroke="#808080" stroke-width="1"/><rect x="4" y="696" width="7" height="1" fill="#808080"/><rect x="7" y="704" width="1" height="3" fill="#808080"/><rect x="7" y="718" width="1" height="2" fill="#808080"/><rect x="2.5" y="707.5" width="10" height="10" fill="#fff" stroke="#808080" stroke-width="1"/><rect x="4" y="712" width="7" height="1" fill="#808080"/><rect x="7" y="720" width="1" height="16" fill="#808080"/><rect x="7" y="736" width="1" height="16" fill="#808080"/><rect x="7" y="744" width="6" height="1" fill="#808080"/></svg>
</div></div><div class="a" style="left:0;top:93px;width:2.4px;height:760px;background:#f4f4f4"></div>
</div>
<div class="a sb" style="left:1233px;top:30px;width:17px;height:850px"></div>

<div class="a th" style="left:1234px;top:47px;width:15px;height:676px"></div>
<div class="a sb" style="left:0;top:880px;width:1250px;height:16px;border-bottom:1px solid #8a8a8a"></div>
<div class="a th" style="left:17px;top:880px;width:1155px;height:16px"></div>
<svg style="left:0;top:0" width="1250" height="896" viewBox="4 57 1250 896" fill="none">
<path d="M1242.2,97.8 L1245.5,94.5 L1248.8,97.8" stroke="#5a5a5a" stroke-width="2.1"/>
<path d="M1242.2,925.2 L1245.5,928.5 L1248.8,925.2" stroke="#5a5a5a" stroke-width="2.1"/>
<path d="M14.5,941.7 L11,945 L14.5,948.3" stroke="#5a5a5a" stroke-width="2.1"/>
<path d="M1226.5,941.7 L1230,945 L1226.5,948.3" stroke="#5a5a5a" stroke-width="2.1"/>
<g fill="#b8b8b8"><rect x="1249" y="942" width="2" height="2"/><rect x="1246" y="945" width="2" height="2"/><rect x="1249" y="945" width="2" height="2"/><rect x="1243" y="948" width="2" height="2"/><rect x="1246" y="948" width="2" height="2"/><rect x="1249" y="948" width="2" height="2"/></g>
</svg>
</div>
<div class="a" style="left:41px;top:953px;width:1224px;height:31px;background:linear-gradient(#ececec,#fdfdfd 10px,#fff 14px)"></div>
<div class="a" style="left:56px;top:953px;width:111px;height:23px;background:linear-gradient(#e2552a,#f15d2a 6px);border-radius:0 0 3px 3px;box-shadow:0 1px 3px rgba(0,0,0,.3)"></div>
<svg style="left:66px;top:953px" width="20" height="20" viewBox="0 0 20 20"><path d="M2.2,13.5 L11.5,4.2 L14.8,7.5 L5.5,16.8 L1.8,17.6 Z M12.6,3.1 L14,1.7 Q14.7,1.2 15.4,1.8 L17.3,3.7 Q17.8,4.4 17.3,5 L15.9,6.4 Z" fill="#fbe4dc"/></svg>
<div class="a" style="left:93px;top:952px;font-size:15.5px;line-height:18px;color:#fdf2ee;-webkit-text-stroke:.45px #fdf2ee;white-space:nowrap;transform:scaleX(0.9268);transform-origin:0 0">Save Edit</div>
<div class="a" style="left:185.5px;top:952px;font-size:15.5px;line-height:18px;color:#6e6e6e;white-space:nowrap;letter-spacing:-0.330px">cancel</div>
<svg style="left:636px;top:951px" width="20" height="16" viewBox="0 0 20 16"><path d="M3,8 L7.5,12.5 L16.5,3.5" fill="none" stroke="#4c4c4c" stroke-width="2.6"/></svg>
<div class="a" style="left:665px;top:953px;width:588px;height:21px;background:linear-gradient(#e6de98,#f7efa6 9px,#f9f1ab)"></div>
<div class="a" style="left:1254px;top:101px;width:11px;height:60px;background:linear-gradient(90deg,#e58a52,#eea06c)"></div>
<div class="a" style="left:1254px;top:161px;width:11px;height:823px;background:linear-gradient(90deg,#bdbdbd,#dadada 5px,#e8e8e8 11px)"></div>
<div class="a" style="left:1265px;top:101px;width:15px;height:883px;background:linear-gradient(90deg,#e8e8e8,#efefef)"></div>
<div class="a" style="left:1254px;top:684px;width:11px;height:11px;background:linear-gradient(90deg,#d34a1e,#e9542a 8px)"></div>
<div class="a" style="left:1253.5px;top:101px;width:1px;height:852px;background:#6a6a6a"></div>
<div class="a" style="left:1265px;top:877px;width:15px;height:58px;background:#c8c8c8"></div>
<svg style="left:1265px;top:101px" width="15" height="883" viewBox="1265 101 15 883" fill="none"><path d="M1268.5,110.5 L1272.5,106.5 L1276.5,110.5" stroke="#5a5a5a" stroke-width="2.2"/><path d="M1268.5,974 L1272.5,978 L1276.5,974" stroke="#5a5a5a" stroke-width="2.2"/></svg>
<div class="a" id="task">
<div class="a" style="left:588px;top:0;width:48px;height:40px;background:#454545"></div>
<div class="ul" style="left:151px;width:40px"></div>
<div class="ul" style="left:494px;width:40px"></div>
<div class="ul" style="left:543px;width:40px"></div>
<div class="ul" style="left:588px;width:48px"></div>
<svg style="left:0;top:0" width="1280" height="40" viewBox="0 984 1280 40" fill="none">
<!-- windows -->
<path d="M16,998.3 L22.6,997.4 V1003.6 H16 Z M23.5,997.3 L32,996 V1003.6 H23.5 Z M16,1004.5 H22.6 V1010.7 L16,1009.8 Z M23.5,1004.5 H32 V1012 L23.5,1010.8 Z" fill="#fff"/>
<!-- search -->
<circle cx="74.6" cy="1001.6" r="5.1" stroke="#fff" stroke-width="1.3"/><path d="M70.9,1005.3 L64.3,1012" stroke="#fff" stroke-width="1.5"/>
<!-- task view -->
<rect x="113.8" y="999.8" width="9" height="8.4" stroke="#fff" stroke-width="1.3"/><path d="M112,996.8 H124.5 M112,1011.2 H124.5 M127.5,996 V998.5 M127.5,1009.5 V1012" stroke="#fff" stroke-width="1.3"/><rect x="126.6" y="1001.6" width="2" height="4.8" fill="#fff"/>
<!-- opera gx -->
<circle cx="171" cy="1004" r="11.3" stroke="#e8204c" stroke-width="1.5"/><ellipse cx="172.2" cy="1003.8" rx="6.6" ry="9.9" stroke="#e8204c" stroke-width="1.5" transform="rotate(8 172 1003.8)"/>
<!-- spotify -->
<circle cx="220" cy="1004" r="12" fill="#1ed760"/><path d="M212.5,999.5 Q220.5,997 228,1000.8 M213.5,1004 Q220.5,1002 226.5,1005 M214.5,1008.2 Q220,1006.6 225,1009" stroke="#101010" stroke-width="2.2" stroke-linecap="round"/>
<!-- media player -->
<path d="M258.5,996 L277.5,994 V1014 L258.5,1012 Z" fill="#6aa8d8"/><path d="M261,997.5 L275,996.5 V1011.5 L261,1010.5 Z" fill="#a8d0f0"/><circle cx="267" cy="1004" r="6.6" fill="#f08a1c" stroke="#f8f0e0" stroke-width="1"/><path d="M265,1000.5 L270.5,1004 L265,1007.5 Z" fill="#fff"/>
<!-- folder -->
<path d="M306.5,995 H314 L316,997 H328.5 V1012 H306.5 Z" fill="#e8a820"/><path d="M306.5,999 H328.5 V1012.5 H306.5 Z" fill="#f8d058"/><rect x="311.5" y="1006" width="12" height="6.5" fill="#3c8ce0"/><rect x="314.5" y="1009" width="6" height="3.5" fill="#f8d058"/>
<!-- store -->
<path d="M362,999 Q362,993 366.5,993 Q371,993 371,999" stroke="#f4f4f4" stroke-width="1.3"/><path d="M355.5,998 H377.5 V1013 Q377.5,1014.5 376,1014.5 H357 Q355.5,1014.5 355.5,1013 Z" fill="#f4f4f4"/><rect x="361.5" y="1001.5" width="4.6" height="4.6" fill="#f04c24"/><rect x="367" y="1001.5" width="4.6" height="4.6" fill="#7cbc00"/><rect x="361.5" y="1007" width="4.6" height="4.6" fill="#00a4f0"/><rect x="367" y="1007" width="4.6" height="4.6" fill="#fcb800"/>
<!-- mail -->
<path d="M404,1001 L416,992.5 L428,1001 V1014.5 H404 Z" fill="#1c86d8"/><path d="M404,1001 L416,1009 L428,1001 V1014.5 H404 Z" fill="#38b4f4"/><path d="M404,1014.5 L416,1006 L428,1014.5 Z" fill="#1c9ae8"/><path d="M406.5,1000.5 H425.5 L416,1007.5 Z" fill="#fff"/>
<!-- putty -->
<rect x="465.5" y="992.5" width="10" height="8" fill="#1c2cd8" stroke="#c4c8d0"/><rect x="455.5" y="1002.5" width="10" height="8" fill="#1c2cd8" stroke="#c4c8d0"/><path d="M464,1001.5 H477 V1003 H464 Z M454,1011.5 H467 V1013.5 H454 Z" fill="#c8ccd4"/><path d="M470,995 L462.5,1003 H466 L461,1009.5 L470.5,1001.5 H466.5 Z" fill="#f4e41c" stroke="#a89c14" stroke-width=".4"/>
<!-- discord -->
<path d="M507,994.5 H521 Q523.5,994.5 523.5,997 V1015.5 L519.5,1012 H507 Q504.5,1012 504.5,1009.5 V997 Q504.5,994.5 507,994.5 Z" fill="#7c8cdc"/><path d="M509,1000 Q514,997.5 519,1000 Q521,1004 520.5,1007.5 Q518.5,1009 517,1008.5 L516.5,1007.5 H511.5 L511,1008.5 Q509.5,1009 507.5,1007.5 Q507,1004 509,1000 Z" fill="#fff"/><ellipse cx="511.8" cy="1004" rx="1.3" ry="1.5" fill="#7c8cdc"/><ellipse cx="516.2" cy="1004" rx="1.3" ry="1.5" fill="#7c8cdc"/>
<!-- fivem -->
<rect x="550.5" y="991.5" width="24.5" height="24.5" fill="#f4883c"/><path d="M561.5,994 H565 L571.5,1014 H567.5 L563.5,1002 L558,1014 H554 Z" fill="#fdf6f0"/><path d="M560,1000 L564,1006 M557.5,1005 L561.5,1011" stroke="#f4883c" stroke-width="1"/>
<!-- rdp -->
<rect x="601.5" y="992.5" width="19" height="14" fill="#1c34d0" stroke="#b4bcc8" stroke-width="1.4"/><path d="M602.5,993.5 H611 L605,1003 H602.5 Z" fill="#5080f0"/><rect x="612" y="995" width="6" height="4" fill="#8cb0f4"/><path d="M607,1008 H615 L616,1011 H606 Z" fill="#b8bcc4"/><rect x="604" y="1011" width="14" height="2" fill="#c8ccd4"/><circle cx="620" cy="1010" r="5.6" fill="#e4e8e4" stroke="#7c8c7c" stroke-width=".8"/><path d="M617.2,1008 L619.4,1010 L617.2,1012 M622.8,1008 L620.6,1010 L622.8,1012" stroke="#2c9a3c" stroke-width="1.3"/>
<!-- tray -->
<path d="M1095,1007 L1100.5,1001.5 L1106,1007" stroke="#fff" stroke-width="1.3"/>
<path d="M1117.5,1002 H1120 L1123.5,998.5 V1010.5 L1120,1007 H1117.5 Z" stroke="#fff" stroke-width="1.1"/><path d="M1126,1001.5 Q1128,1004.5 1126,1007.5 M1128.5,999.5 Q1131.5,1004.5 1128.5,1009.5" stroke="#fff" stroke-width="1.1"/><path d="M1131,998 Q1134.6,1004.5 1131,1011" stroke="#9c9c9c" stroke-width="1.1"/>
<rect x="1146.5" y="998.5" width="11" height="7.5" stroke="#fff" stroke-width="1.2"/><path d="M1144.5,997 V1002.5 M1148,1010.5 H1156 M1152,1006 V1010.5" stroke="#fff" stroke-width="1.2"/>
<path d="M1239.5,995.5 H1254.5 V1007.5 H1243.5 L1239.5,1011.5 Z" fill="#fff"/><path d="M1242,999 H1252 M1242,1001.5 H1252 M1242,1004 H1249" stroke="#101010" stroke-width="1"/>
<circle cx="1255.5" cy="1011" r="7.5" fill="#1c1c1c" stroke="#8c8c8c" stroke-width="1.1"/>
<path d="M1275.5,984 V1024" stroke="#5c5c5c" stroke-width="1"/>
</svg>
<div class="a clock" style="top:0;left:1181px;top:4px;transform:scaleX(0.8658);transform-origin:0 0">15:08</div>
<div class="a clock" style="top:0;left:1167.5px;top:22px;transform:scaleX(0.8907);transform-origin:0 0">16.04.2020</div>
<div class="a clock" style="top:0;left:1252.5px;top:20px;font-size:11px;font-weight:bold">6</div>
</div>
</body></html>
